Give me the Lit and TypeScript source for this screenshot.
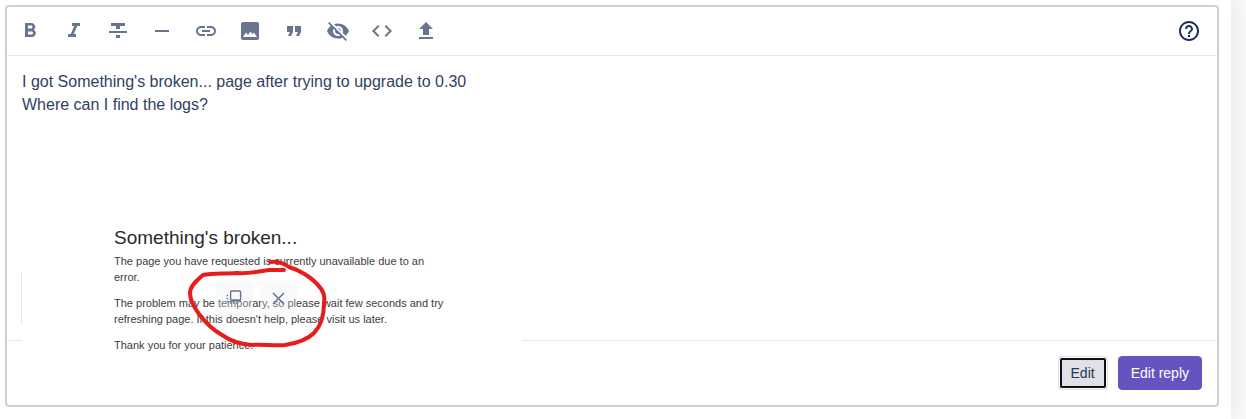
import { LitElement, html, css, svg } from "lit";
import { customElement } from "lit/decorators.js";

interface Tool {
  label: string;
  path: string;
}

const TOOLS: Tool[] = [
  { label: "Bold", path: "M15.6 10.79c.97-.67 1.65-1.77 1.65-2.79 0-2.26-1.75-4-4-4H7v14h7.04c2.09 0 3.71-1.7 3.71-3.79 0-1.52-.86-2.82-2.15-3.42zM10 6.5h3c.83 0 1.5.67 1.5 1.5s-.67 1.5-1.5 1.5h-3v-3zm3.5 9H10v-3h3.5c.83 0 1.5.67 1.5 1.5s-.67 1.5-1.5 1.5z" },
  { label: "Italic", path: "M10 4v3h2.21l-3.42 8H6v3h8v-3h-2.21l3.42-8H18V4z" },
  { label: "Strikethrough", path: "M10 19h4v-3h-4v3zM5 4v3h5v3h4V7h5V4H5zM3 14h18v-2H3v2z" },
  { label: "Horizontal rule", path: "M19 13H5v-2h14v2z" },
  { label: "Link", path: "M3.9 12c0-1.71 1.39-3.1 3.1-3.1h4V7H7c-2.76 0-5 2.24-5 5s2.24 5 5 5h4v-1.9H7c-1.71 0-3.1-1.39-3.1-3.1zM8 13h8v-2H8v2zm9-6h-4v1.9h4c1.71 0 3.1 1.39 3.1 3.1s-1.39 3.1-3.1 3.1h-4V17h4c2.76 0 5-2.24 5-5s-2.24-5-5-5z" },
  { label: "Image", path: "M21 19V5c0-1.1-.9-2-2-2H5c-1.1 0-2 .9-2 2v14c0 1.1.9 2 2 2h14c1.1 0 2-.9 2-2zM5 18l3-4.5 2 2.6L12.5 12.5l2 2.7 1.5-1.7L19 18H5z" },
  { label: "Quote", path: "M6 17h3l2-4V7H5v6h3zm8 0h3l2-4V7h-6v6h3z" },
  { label: "Spoiler", path: "M12 7c2.76 0 5 2.24 5 5 0 .65-.13 1.26-.36 1.83l2.92 2.92c1.51-1.26 2.7-2.89 3.43-4.75-1.73-4.39-6-7.5-11-7.5-1.4 0-2.74.25-3.98.7l2.16 2.16C10.74 7.13 11.35 7 12 7zM2 4.27l2.28 2.28.46.46C3.08 8.3 1.78 10.02 1 12c1.73 4.39 6 7.5 11 7.5 1.55 0 3.03-.3 4.38-.84l.42.42L19.73 22 21 20.73 3.27 3 2 4.27zM7.53 9.8l1.55 1.55c-.05.21-.08.43-.08.65 0 1.66 1.34 3 3 3 .22 0 .44-.03.65-.08l1.55 1.55c-.67.33-1.41.53-2.2.53-2.76 0-5-2.24-5-5 0-.79.2-1.53.53-2.2zm4.31-.78l3.15 3.15.02-.16c0-1.66-1.34-3-3-3l-.17.01z" },
  { label: "Code", path: "M9.4 16.6L4.8 12l4.6-4.6L8 6l-6 6 6 6 1.4-1.4zm5.2 0l4.6-4.6-4.6-4.6L16 6l6 6-6 6-1.4-1.4z" },
  { label: "Upload", path: "M5 20h14v-2H5v2zm0-10h4v6h6v-6h4l-7-7-7 7z" },
];

const HELP =
  "M11 18h2v-2h-2v2zm1-16C6.48 2 2 6.48 2 12s4.48 10 10 10 10-4.48 10-10S17.52 2 12 2zm0 18c-4.41 0-8-3.59-8-8s3.59-8 8-8 8 3.59 8 8-3.59 8-8 8zm0-14c-2.21 0-4 1.79-4 4h2c0-1.1.9-2 2-2s2 .9 2 2c0 2-3 1.75-3 5h2c0-2.25 3-2.5 3-5 0-2.21-1.79-4-4-4z";

const icon = (path: string) =>
  html`<svg viewBox="0 0 24 24" aria-hidden="true">${svg`<path d=${path} />`}</svg>`;

@customElement("error-preview")
export class ErrorPreview extends LitElement {
  static styles = css`
    :host {
      display: block;
      position: relative;
      box-sizing: border-box;
      width: 500px;
      max-width: 100%;
      padding: 110px 72px 3px 92px;
      background: #fff;
      color: #3c3c3c;
      font-size: 11px;
      line-height: 16px;
    }
    :host::before {
      content: "";
      position: absolute;
      left: -1px;
      top: 156px;
      height: 52px;
      border-left: 1px solid #e6e6ea;
    }
    .title {
      margin: 0 0 3px;
      color: #2b2b2b;
      font-size: 19px;
      font-weight: 400;
      line-height: 24px;
    }
    .para {
      margin: 0 0 10px;
    }
    .para:last-of-type {
      margin: 0;
    }
    .actions {
      position: absolute;
      left: 194px;
      top: 165px;
      display: flex;
      gap: 7px;
    }
    .action {
      display: grid;
      place-items: center;
      width: 37px;
      height: 36px;
      padding: 0;
      border: 0;
      border-radius: 4px;
      background: rgba(240, 240, 246, 0.3);
    }
    .action svg {
      width: 18px;
      height: 18px;
      fill: none;
      stroke: #66758f;
    }
    .mark {
      position: absolute;
      left: 158px;
      top: 136px;
      width: 150px;
      height: 100px;
      fill: none;
      stroke: #e81c1c;
      stroke-width: 4;
      stroke-linecap: round;
      stroke-linejoin: round;
      pointer-events: none;
    }
  `;

  render() {
    return html`
      <h2 class="title">Something's broken...</h2>
      <p class="para">The page you have requested is currently unavailable due to an error.</p>
      <p class="para">
        The problem may be temporary, so please wait few seconds and try refreshing page. If this
        doesn't help, please visit us later.
      </p>
      <p class="para">Thank you for your patience.</p>
      <div class="actions">
        <button class="action" aria-label="Move image">
          <svg viewBox="0 0 18 18" aria-hidden="true">
            <rect x="4.6" y="1" width="10" height="9.4" rx="1" stroke-width="1.4" />
            <path d="M5 10.4h10" stroke-width="2" />
            <path d="M1.4 4.8v9" stroke-width="1.5" stroke-dasharray="1.5 1.5" />
            <path d="M4 13h8" stroke-width="1.5" stroke-dasharray="1.5 1.5" />
          </svg>
        </button>
        <button class="action" aria-label="Remove image">
          <svg viewBox="0 0 18 18" aria-hidden="true">
            <path d="M3 3l11 11M14 3l-11 11" stroke-width="1.5" />
          </svg>
        </button>
      </div>
      <svg class="mark" viewBox="180 252 150 100" aria-hidden="true">
        <path d="M270 262C279 261 285 264 289 267C299 270 311 277 317 284C324 291 325 296 324 303C324 316 321 326 314 333C307 340 298 343 285 345C273 346 263 344 251 345C239 344 229 340 222 335C213 330 205 322 199 314C193 306 190 300 190 293C190 286 197 280 203 275C213 273 223 274 237 273C250 274 260 271 269 270H284" />
      </svg>
    `;
  }
}

@customElement("app-root")
export class AppRoot extends LitElement {
  static styles = css`
    :host {
      display: block;
      padding-right: 15px;
      background: #f9fafb;
      font-family: "Liberation Sans", Arial, sans-serif;
      overflow: hidden;
    }
    .page {
      box-sizing: border-box;
      min-height: 100vh;
      padding: 5px 12px 12px 5px;
      background: #fff;
      box-shadow: 0 0 20px rgba(30, 40, 60, 0.12);
    }
    .composer {
      border: 2px solid #cdd0dc;
      border-radius: 4px;
    }
    .toolbar {
      display: flex;
      align-items: center;
      gap: 20px;
      padding: 12px 16px 12px 11px;
      border-bottom: 1px solid #e6e7ea;
    }
    .tool {
      display: block;
      width: 24px;
      height: 24px;
      padding: 0;
      border: 0;
      background: none;
      fill: #67758f;
    }
    .tool svg {
      display: block;
      width: 24px;
      height: 24px;
    }
    .help {
      margin-left: auto;
      fill: #1b2f56;
    }
    .body {
      padding: 14px 15px 0;
      color: #2f4263;
      font-size: 16px;
      line-height: 23px;
    }
    .line {
      margin: 0;
    }
    .preview {
      margin-bottom: -16px;
    }
    .footer {
      display: flex;
      justify-content: flex-end;
      gap: 10px;
      padding: 15px;
      border-top: 1px solid #e6e7ec;
    }
    .button {
      height: 34px;
      padding: 0 12px;
      border: 1px solid #6554c0;
      border-radius: 4px;
      background: #6554c0;
      color: #fff;
      font-family: inherit;
      font-size: 14px;
    }
    .edit {
      border-color: #dfe1e6;
      background: #dfe1e6;
      box-shadow: inset 0 0 0 1px #fff, inset 0 0 0 3px #101010;
      color: #253858;
    }
  `;

  render() {
    return html`
      <main class="page">
        <section class="composer">
          <div class="toolbar" role="toolbar">
            ${TOOLS.map(
              (t) => html`<button class="tool" aria-label=${t.label}>${icon(t.path)}</button>`
            )}
            <button class="tool help" aria-label="Help">${icon(HELP)}</button>
          </div>
          <div class="body">
            <p class="line">I got Something's broken... page after trying to upgrade to 0.30</p>
            <p class="line">Where can I find the logs?</p>
            <error-preview class="preview"></error-preview>
          </div>
          <div class="footer">
            <button class="button edit">Edit</button>
            <button class="button">Edit reply</button>
          </div>
        </section>
      </main>
    `;
  }
}
